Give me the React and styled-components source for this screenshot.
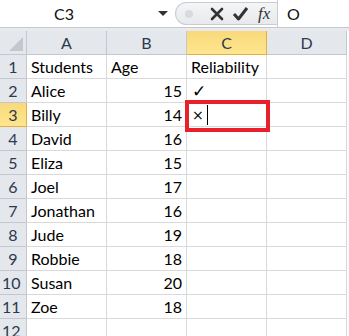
import styled, { createGlobalStyle } from 'styled-components'
import { Fragment } from 'react'

const Global = createGlobalStyle`
  html, body { margin: 0; padding: 0; background: #fff; }
  body { font-family: Lato, "Liberation Sans", sans-serif; }
`

const Page = styled.div`
  width: 349px;
  height: 336px;
  overflow: hidden;
  background: #fff;
`

const FormulaBar = styled.div`
  display: flex;
  height: 27px;
  border-bottom: 1px solid #c5c9cf;
  background: #fff;
`

const NameBox = styled.div`
  width: 175px;
  display: flex;
  align-items: center;
  font-size: 16px;
  color: #111;
`
const NameText = styled.span`
  flex: 1;
  text-align: center;
  padding-right: 30px;
`
const DropArrow = styled.span`
  width: 0;
  height: 0;
  border-left: 5px solid transparent;
  border-right: 5px solid transparent;
  border-top: 5px solid #333;
  margin-right: 7px;
`

const Tools = styled.div`
  width: 102px;
  display: flex;
  align-items: center;
  gap: 7px;
  box-sizing: border-box;
  margin: 2px 0 0;
  height: 23px;
  border: 1px solid #c9ccd1;
  border-right: none;
  border-radius: 12px 0 0 12px;
  background: linear-gradient(#f4f5f7, #e7e9ec);
  padding-left: 9px;
`
const Dot = styled.span`
  width: 8px;
  height: 8px;
  border-radius: 50%;
  background: #d8dadd;
  margin-right: 9px;
`
const Fx = styled.span`
  font-family: "Liberation Serif", serif;
  font-style: italic;
  font-size: 17px;
  color: #333;
  margin-left: 2px;
`
const Formula = styled.div`
  flex: 1;
  border-left: 1px solid #c9ccd1;
  display: flex;
  align-items: center;
  padding-left: 9px;
  font-size: 16px;
  color: #111;
`

const Band = styled.div`
  height: 3px;
  background: #e8eaed;
`

const Grid = styled.div`
  display: grid;
  grid-template-columns: 27px repeat(4, 80px);
  grid-auto-rows: 24px;
  position: relative;
`

const Head = styled.div`
  box-sizing: border-box;
  background: ${p => (p.$sel ? 'linear-gradient(#f9d97a, #fde68f)' : '#e4e7eb')};
  border-right: 1px solid ${p => (p.$sel ? '#e6ae3a' : '#c4c8ce')};
  border-bottom: 1px solid ${p => (p.$sel ? '#e6ae3a' : '#c4c8ce')};
  display: flex;
  align-items: center;
  justify-content: center;
  font-size: 16px;
  color: #2b3a4f;
  position: relative;
`
const RowHead = styled(Head)`
  justify-content: ${p => (p.$wide ? 'flex-start' : 'center')};
  padding-left: ${p => (p.$wide ? '2px' : '0')};
`

const Corner = styled(Head)`
  &::after {
    content: '';
    position: absolute;
    right: 3px;
    bottom: 3px;
    width: 0;
    height: 0;
    border-left: 14px solid transparent;
    border-bottom: 14px solid #c4c8cd;
  }
`

const Cell = styled.div`
  box-sizing: border-box;
  border-right: 1px solid #d9d9d9;
  border-bottom: 1px solid #d9d9d9;
  display: flex;
  align-items: center;
  justify-content: ${p => (p.$num ? 'flex-end' : 'flex-start')};
  padding: 0 4px;
  font-size: 16px;
  color: #000;
  white-space: nowrap;
`

const Mark = styled.span`
  font-family: "DejaVu Sans", sans-serif;
  font-size: ${p => p.$size || 14}px;
  margin-left: 1px;
`
const Caret = styled.span`
  display: inline-block;
  width: 1px;
  height: 20px;
  background: #000;
  margin-left: 3px;
`

const Selection = styled.div`
  position: absolute;
  left: 185px;
  top: 69px;
  width: 85px;
  height: 32px;
  box-sizing: border-box;
  border: 4px solid #e8202a;
  pointer-events: none;
`

const data = [
  ['Students', 'Age', 'Reliability'],
  ['Alice', 15, 'check'],
  ['Billy', 14, 'cross'],
  ['David', 16],
  ['Eliza', 15],
  ['Joel', 17],
  ['Jonathan', 16],
  ['Jude', 19],
  ['Robbie', 18],
  ['Susan', 20],
  ['Zoe', 18],
  [],
]

const cols = ['A', 'B', 'C', 'D']

function CellContent({ v }) {
  if (v === 'check') return <Mark $size={17}>✓</Mark>
  if (v === 'cross') return <><Mark $size={14}>×</Mark><Caret /></>
  return v ?? ''
}

export default function App() {
  return (
    <Page>
      <Global />
      <FormulaBar>
        <NameBox>
          <NameText>C3</NameText>
          <DropArrow />
        </NameBox>
        <Tools>
          <Dot />
          <svg width="16" height="16" viewBox="0 0 16 16">
            <path d="M3 3 L13 13 M13 3 L3 13" stroke="#333" strokeWidth="2.6" strokeLinecap="round" />
          </svg>
          <svg width="17" height="16" viewBox="0 0 17 16">
            <path d="M2 8 L6.5 13 L15 2" stroke="#333" strokeWidth="3" fill="none" strokeLinejoin="round" />
          </svg>
          <Fx>fx</Fx>
        </Tools>
        <Formula>O</Formula>
      </FormulaBar>
      <Band />
      <Grid>
        <Corner />
        {cols.map(c => (
          <Head key={c} $sel={c === 'C'}>{c}</Head>
        ))}
        {data.map((row, i) => (
          <Fragment key={i}>
            <RowHead $sel={i === 2} $wide={i + 1 >= 10}>{i + 1}</RowHead>
            <Cell>{row[0]}</Cell>
            <Cell $num={typeof row[1] === 'number'}>{row[1]}</Cell>
            <Cell><CellContent v={row[2]} /></Cell>
            <Cell />
          </Fragment>
        ))}
        <Selection />
      </Grid>
    </Page>
  )
}
